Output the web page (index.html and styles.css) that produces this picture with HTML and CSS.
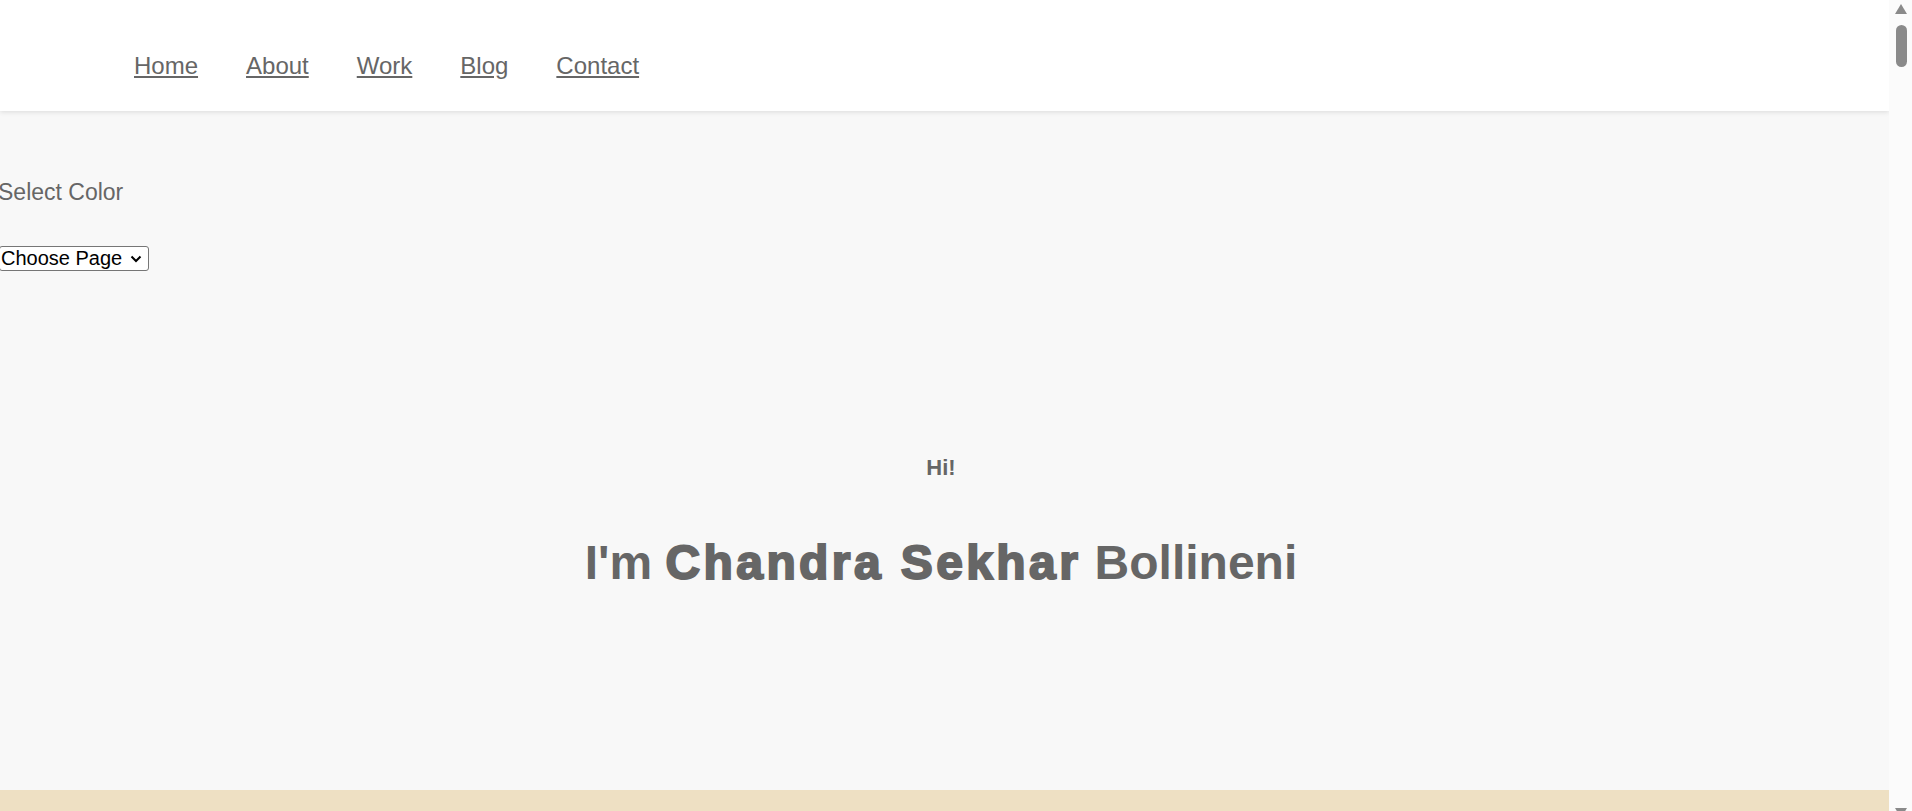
FILE: index.html
```html
<!DOCTYPE html>
<html lang="en">
<head>
<meta charset="utf-8">
<title>Chandra Sekhar Bollineni</title>
<link rel="stylesheet" href="styles.css">
</head>
<body>
<header class="site-header">
  <nav class="nav">
    <a href="#" class="nav-link">Home</a>
    <a href="#" class="nav-link">About</a>
    <a href="#" class="nav-link">Work</a>
    <a href="#" class="nav-link">Blog</a>
    <a href="#" class="nav-link">Contact</a>
  </nav>
</header>
<section class="controls">
  <p class="color-label">Select Color</p>
  <select class="page-select">
    <option>Choose Page</option>
    <option>Home</option>
    <option>About</option>
  </select>
</section>
<section class="hero">
  <p class="hero-hi">Hi!</p>
  <h1 class="hero-title">I'm <span class="hero-strong">Chandra Sekhar</span> Bollineni</h1>
</section>
<section class="band"></section>
<div class="scrollbar" aria-hidden="true">
  <span class="scroll-arrow scroll-up"></span>
  <span class="scroll-thumb"></span>
  <span class="scroll-arrow scroll-down"></span>
</div>
</body>
</html>
```

FILE: styles.css
```css
html, body {
  margin: 0;
  padding: 0;
}
body {
  background: #f8f8f8;
  font-family: "Liberation Sans", Arial, sans-serif;
  color: #666;
  margin-right: 23px;
}
.site-header {
  background: #fff;
  height: 111px;
  box-sizing: border-box;
  padding-top: 52px;
  box-shadow: 0 1px 5px rgba(0, 0, 0, 0.12);
  position: relative;
  z-index: 1;
}
.nav {
  display: flex;
  gap: 48px;
  padding-left: 134px;
}
.nav-link {
  font-size: 24px;
  line-height: 1.15;
  color: #666;
  text-decoration: underline;
}
.controls {
  padding-top: 68px;
}
.color-label {
  margin: 0 0 0 -2px;
  font-size: 23px;
  line-height: 1.15;
  color: #666;
}
.page-select {
  -webkit-appearance: none;
  appearance: none;
  display: block;
  box-sizing: border-box;
  margin: 41px 0 0 -1px;
  font-family: "Liberation Sans", Arial, sans-serif;
  font-size: 20px;
  line-height: 23px;
  color: #000;
  height: 25px;
  width: 150px;
  padding: 0 0 0 1px;
  border: 1px solid #767676;
  border-radius: 3px;
  background: #fff url("data:image/svg+xml,%3Csvg xmlns='http://www.w3.org/2000/svg' width='12' height='8' viewBox='0 0 12 8'%3E%3Cpath d='M1.5 1.5 L6 6 L10.5 1.5' fill='none' stroke='%23000' stroke-width='2'/%3E%3C/svg%3E") no-repeat right 6px center;
}
.hero {
  padding: 184px 7px 200px 0;
  text-align: center;
}
.hero-hi {
  margin: 0;
  font-size: 22px;
  font-weight: bold;
  line-height: 1.15;
}
.hero-title {
  margin: 54px 0 0;
  font-size: 48px;
  font-weight: bold;
  line-height: 1.15;
}
.hero-strong {
  font-weight: 900;
  letter-spacing: 3.4px;
  -webkit-text-stroke: 2px #666;
}
.band {
  background: #eee0c3;
  height: 600px;
}
.scrollbar {
  position: fixed;
  top: 0;
  right: 0;
  bottom: 0;
  width: 23px;
  background: #fbfbfb;
  z-index: 5;
}
.scroll-arrow {
  position: absolute;
  left: 6px;
  width: 0;
  height: 0;
  border-left: 6px solid transparent;
  border-right: 6px solid transparent;
}
.scroll-up {
  top: 4px;
  border-bottom: 10px solid #8a8a8a;
}
.scroll-down {
  bottom: -7px;
  border-top: 10px solid #8a8a8a;
}
.scroll-thumb {
  position: absolute;
  top: 25px;
  left: 7px;
  width: 11px;
  height: 42px;
  border-radius: 6px;
  background: #8a8a8a;
}
```
